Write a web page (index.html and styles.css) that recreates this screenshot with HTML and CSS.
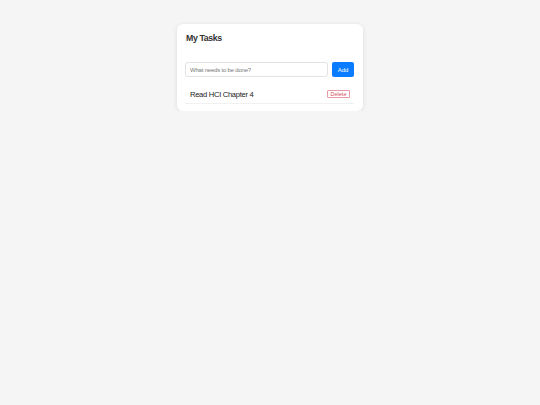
FILE: index.html
```html
<!DOCTYPE html>
<html>
<head>
<meta charset="utf-8">
<link rel="stylesheet" href="styles.css">
</head>
<body>
<div class="card">
  <h1 class="title">My Tasks</h1>
  <div class="add-row">
    <input class="task-input" type="text" placeholder="What needs to be done?">
    <button class="add-btn">Add</button>
  </div>
  <ul class="task-list">
    <li class="task">
      <span class="task-text">Read HCI Chapter 4</span>
      <button class="del-btn">Delete</button>
    </li>
  </ul>
</div>
</body>
</html>
```
FILE: styles.css
```css
html, body {
  margin: 0;
  padding: 0;
  background: #f4f5f4;
  font-family: "Liberation Sans", Arial, sans-serif;
}
body {
  display: flex;
  justify-content: center;
  padding-top: 24px;
}
.card {
  width: 186px;
  box-sizing: border-box;
  background: #fff;
  border-radius: 6px;
  box-shadow: 0 1px 5px rgba(0,0,0,0.1);
  padding: 9px 9px 7px 8px;
}
.title {
  margin: 0 0 0 1px;
  font-size: 8.8px;
  letter-spacing: -0.4px;
  line-height: 11px;
  color: #333;
  font-weight: bold;
}
.add-row {
  display: flex;
  gap: 4px;
  margin-top: 18px;
}
.task-input {
  flex: 1;
  min-width: 0;
  height: 15px;
  box-sizing: border-box;
  border: 1px solid #e2e2e2;
  border-radius: 3px;
  padding: 0 4px;
  font-family: inherit;
  font-size: 6px;
  letter-spacing: -0.2px;
  color: #333;
  outline: none;
}
.task-input::placeholder { color: #7a7a7a; }
.add-btn {
  width: 22px;
  height: 15px;
  box-sizing: border-box;
  border: none;
  border-radius: 2px;
  background: #0a7cff;
  color: #fff;
  font-family: inherit;
  font-size: 6px;
  padding: 0;
}
.task-list {
  list-style: none;
  margin: 8px 0 0;
  padding: 0;
}
.task {
  display: flex;
  align-items: center;
  justify-content: space-between;
  height: 18px;
  padding: 0 4px 0 5px;
  border-bottom: 1px solid #f0f0f0;
}
.task-text {
  font-size: 7.6px;
  letter-spacing: -0.3px;
  color: #222;
}
.del-btn {
  height: 8px;
  width: 23px;
  box-sizing: border-box;
  border: 1px solid #e79aa3;
  background: #fff;
  color: #d8495a;
  font-family: inherit;
  font-size: 5.5px;
  padding: 0;
  border-radius: 1px;
  line-height: 6px;
}
```
